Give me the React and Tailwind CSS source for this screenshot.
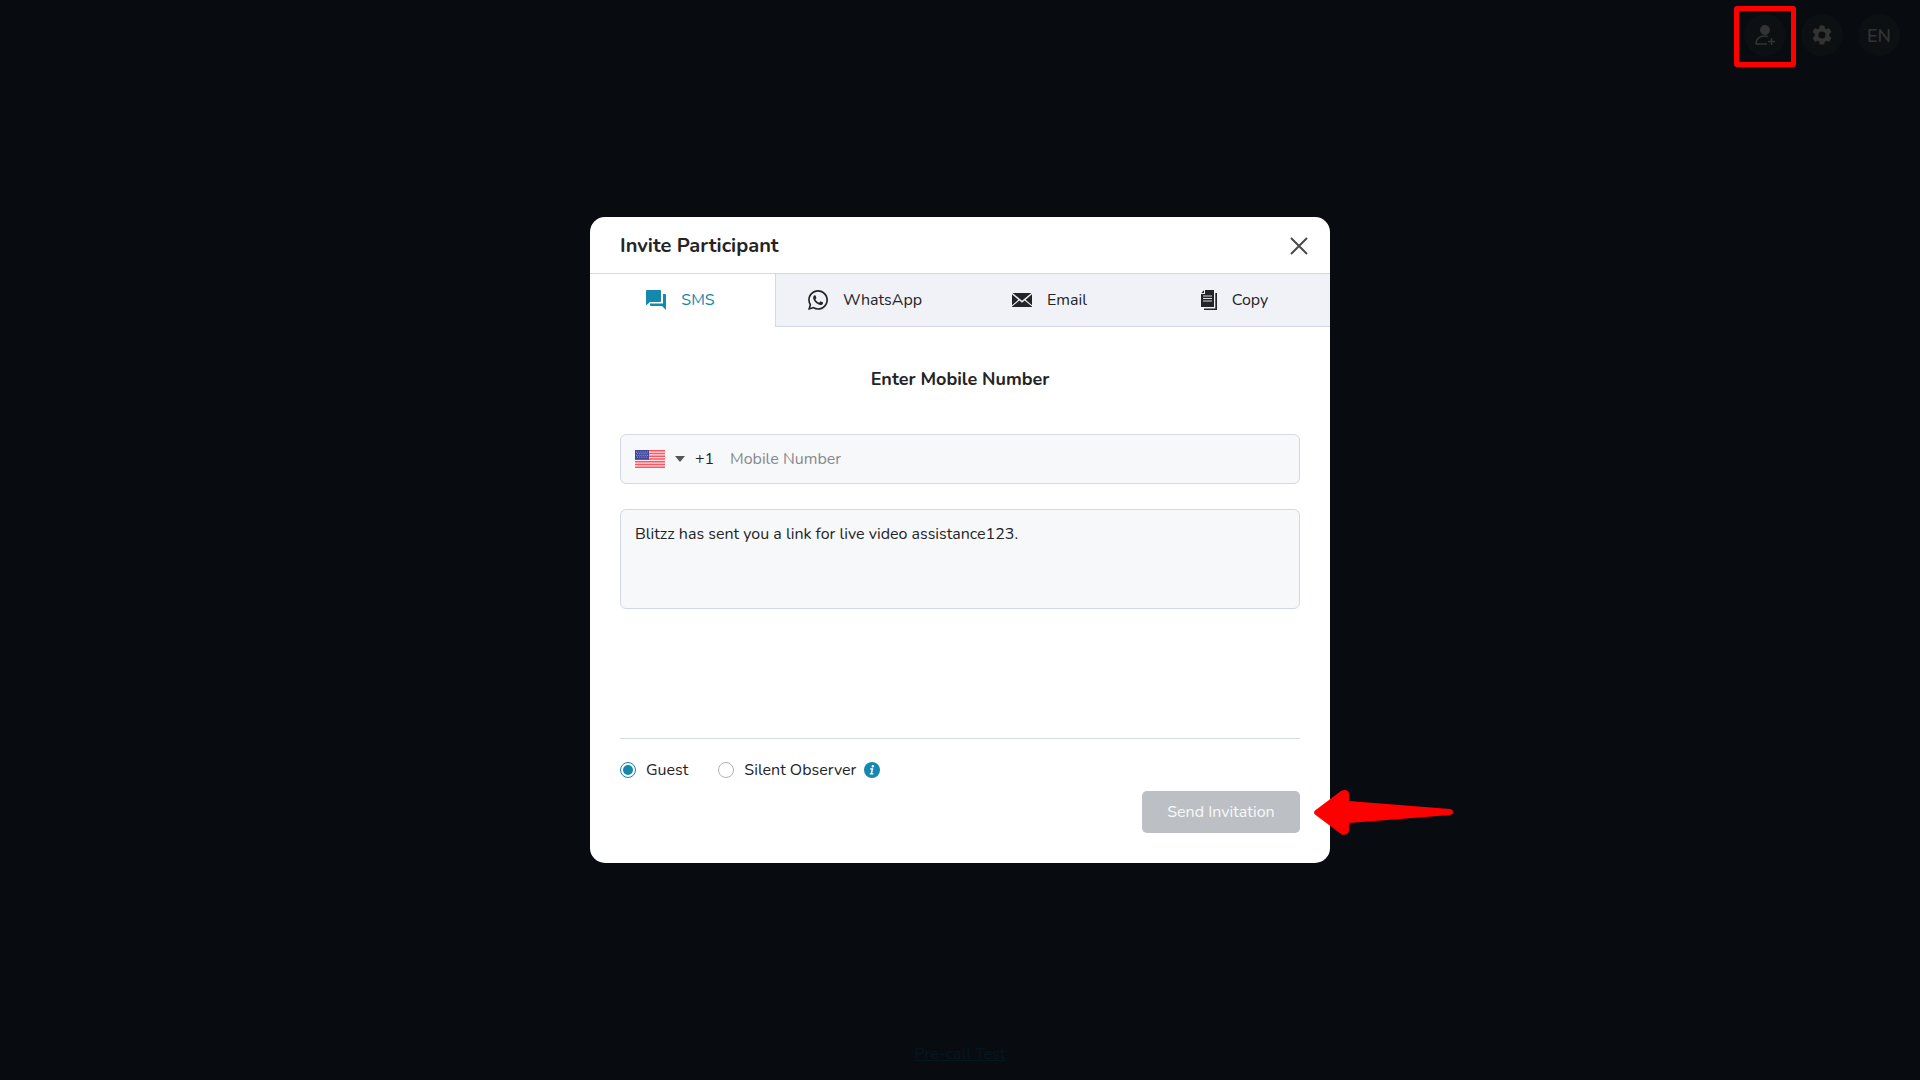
import { useState } from 'react';

const SmsIcon = () => (
  <svg viewBox="0 0 20 20" className="w-5 h-5" fill="currentColor" aria-hidden="true">
    <path d="M1 0h13a1 1 0 0 1 1 1v10a1 1 0 0 1-1 1H4l-4 3.500V1a1 1 0 0 1 1-1z" />
    <path d="M17 4h2a1 1 0 0 1 1 1v15l-4-4H5a1 1 0 0 1-1-1v-1.500h13z" />
  </svg>
);

const WhatsAppIcon = () => (
  <svg viewBox="0 0 24 24" className="w-5 h-5" fill="currentColor" aria-hidden="true">
    <path d="M12.040 0C5.500 0 .180 5.300.180 11.850c0 2.100.550 4.130 1.590 5.930L0 24l6.360-1.660a11.900 11.900 0 0 0 5.680 1.450c6.540 0 11.960-5.320 11.960-11.890C24 5.300 18.600 0 12.040 0zm0 21.780c-1.800 0-3.520-.480-5.030-1.380l-.360-.210-3.770.980 1-3.660-.240-.380a9.800 9.800 0 0 1-1.500-5.250c0-5.450 4.440-9.870 9.900-9.870 5.440 0 9.900 4.420 9.900 9.870s-4.460 9.900-9.900 9.900z" />
    <path d="M8.300 6.400c.3 0 .6 0 .8.600l.9 2.100c.1.300.1.500-.1.800l-.8 1c-.2.200-.2.400 0 .7 1 1.700 2.300 2.800 4 3.500.3.100.500.100.700-.1l.9-1.100c.2-.3.400-.3.700-.2l2.300 1.100c.300.200.500.300.400.800-.1 1.500-1.400 2.500-2.900 2.500-3.800-.3-8.600-4.600-9-8.500 0-1.500.9-3.200 2.100-3.200z" />
  </svg>
);

const EmailIcon = () => (
  <svg viewBox="0 0 20 14" className="w-5 h-[14px]" fill="currentColor" aria-hidden="true">
    <path d="M.6 0h18.800L10 7.800z" />
    <path d="M0 1.200 6.400 6.800 0 12.200zM20 1.200v11l-6.400-5.400z" />
    <path d="m7.400 7.600 2.600 2.200 2.600-2.200L20 13.500V14H0v-.5z" />
  </svg>
);

const CopyIcon = () => (
  <svg viewBox="0 0 16 20" className="w-4 h-5" fill="currentColor" aria-hidden="true">
    <path d="M4 0h9v17H0V4h4z" />
    <path d="M3 .3V3H.3z" />
    <path d="M14.300 3H16v17H3v-1.600h11.300z" />
    <path d="M2 6h9M2 8.500h9M2 11h9" stroke="#d9dbe2" />
  </svg>
);

const InviteIcon = () => (
  <svg viewBox="0 0 20 20" className="w-5 h-5" aria-hidden="true">
    <circle cx="10" cy="5" r="5" fill="currentColor" />
    <path d="M13 11.600c-1-.5-2-.6-3.500-.6C4.500 11 1 14.500 1 18v1h11" fill="none" stroke="currentColor" strokeWidth="1.500" />
    <path d="M16.500 13v7M13 16.500h7" stroke="currentColor" strokeWidth="1.500" />
  </svg>
);

const GearIcon = () => (
  <svg viewBox="2 2 20 20" className="w-5 h-5" fill="currentColor" aria-hidden="true">
    <path d="M19.140 12.940c.040-.300.060-.610.060-.940 0-.320-.020-.640-.070-.940l2.030-1.580a.490.490 0 0 0 .120-.610l-1.920-3.320a.488.488 0 0 0-.590-.220l-2.390.960c-.500-.380-1.030-.700-1.620-.940l-.360-2.540a.484.484 0 0 0-.480-.410h-3.840c-.240 0-.430.170-.470.410l-.360 2.540c-.590.240-1.130.570-1.620.940l-2.390-.960c-.220-.080-.470 0-.590.220L2.740 8.870c-.120.210-.080.470.120.610l2.030 1.580c-.050.300-.090.630-.090.940s.020.640.070.940l-2.030 1.580a.490.490 0 0 0-.120.610l1.920 3.320c.120.220.370.290.590.220l2.390-.960c.500.380 1.030.700 1.620.940l.360 2.540c.050.240.240.410.480.410h3.840c.240 0 .440-.170.470-.410l.360-2.540c.590-.240 1.130-.560 1.620-.940l2.390.960c.220.080.470 0 .590-.220l1.920-3.320c.120-.220.070-.470-.120-.610l-2.010-1.580zM12 15.600A3.600 3.600 0 1 1 12 8.400a3.600 3.600 0 0 1 0 7.200z" />
  </svg>
);

const CloseIcon = () => (
  <svg viewBox="0 0 18 18" className="w-[18px] h-[18px]" fill="none" stroke="currentColor" strokeWidth="2" aria-hidden="true">
    <path d="m1 1 16 16M17 1 1 17" />
  </svg>
);

const UsFlag = () => (
  <svg viewBox="0 0 30 18" className="w-[30px] h-[18px] shrink-0" aria-hidden="true">
    <rect width="30" height="18" fill="#ffe3e5" />
    <path
      d="M0 .7h30M0 3.500h30M0 6.200h30M0 9h30M0 11.800h30M0 14.500h30M0 17.300h30"
      stroke="#ff5560"
      strokeWidth="1.400"
    />
    <rect width="14" height="9.700" fill="#41479b" />
    <path
      d="M1 2h12M2 3.700h11M1 5.400h12M2 7.100h11"
      stroke="#a9acd6"
      strokeWidth=".9"
      strokeDasharray="1 1.200"
    />
  </svg>
);

const InfoIcon = () => (
  <svg viewBox="0 0 16 16" className="w-4 h-4" aria-hidden="true">
    <circle cx="8" cy="8" r="8" fill="#1488ad" />
    <circle cx="8.900" cy="4.200" r="1.200" fill="#fff" />
    <path d="M6.200 6.300h3.200l-1.200 5h1.300l-.3 1.200H5.700l.3-1.200h.6l.9-3.800H6z" fill="#fff" />
  </svg>
);

const Arrow = () => (
  <svg
    viewBox="0 0 139 46"
    className="absolute left-full top-1/2 -translate-y-1/2 ml-[14px] w-[139px] h-[46px]"
    fill="#ff0000"
    aria-hidden="true"
  >
    <path d="M1 21.500 27 2c3-2 8-1.500 8 3v7l101 8c4 .5 4 5.500 0 6L35 34v7c0 4.500-5 6-8 4L1 25.500c-1.300-1.300-1.300-2.700 0-4z" />
  </svg>
);

const tabs = [
  { id: 'sms', label: 'SMS', Icon: SmsIcon },
  { id: 'whatsapp', label: 'WhatsApp', Icon: WhatsAppIcon },
  { id: 'email', label: 'Email', Icon: EmailIcon },
  { id: 'copy', label: 'Copy', Icon: CopyIcon },
];

const roundButton = 'w-[42px] h-[42px] rounded-full bg-[#0c1013] text-[#333333] flex items-center justify-center';

const Radio = ({ label, value, role, setRole }) => (
  <label className="flex items-center gap-[10px]">
    <input
      type="radio"
      name="role"
      checked={role === value}
      onChange={() => setRole(value)}
      className="appearance-none w-4 h-4 rounded-full border border-[#b0b0b0] bg-white bg-clip-content p-[2px] checked:border-[#1488ad] checked:bg-[#1488ad]"
    />
    {label}
  </label>
);

export default function App() {
  const [tab, setTab] = useState('sms');
  const [role, setRole] = useState('guest');
  const [message, setMessage] = useState('Blitzz has sent you a link for live video assistance123.');

  return (
    <div className="min-h-screen flex flex-col bg-[#080c10] text-[#242426] text-base font-['Nunito','Lato',sans-serif]">
      <header className="h-[70px] shrink-0 px-5 flex items-center justify-end gap-[15px]">
        <div className="relative">
          <button type="button" aria-label="Invite participant" className={roundButton}>
            <InviteIcon />
          </button>
          <div className="absolute -top-2 -left-[10px] w-[62px] h-[61px] rounded-[3px] border-[5px] border-[#ff0000] pointer-events-none"></div>
        </div>
        <button type="button" aria-label="Settings" className={roundButton}>
          <GearIcon />
        </button>
        <button type="button" className={`${roundButton} pt-[2px] text-lg font-semibold`}>EN</button>
      </header>

      <main className="flex-1 flex items-center justify-center px-4">
        <section role="dialog" aria-labelledby="invite-title" className="w-full max-w-[740px] bg-white rounded-[15px]">
          <div className="h-14 pl-[30px] pr-[22px] pt-[2px] flex items-center justify-between">
            <h1 id="invite-title" className="text-xl font-bold">Invite Participant</h1>
            <button type="button" aria-label="Close" className="text-[#4a4a4a]">
              <CloseIcon />
            </button>
          </div>

          <div role="tablist" className="grid grid-cols-4 border-t border-[#d5d9e6]">
            {tabs.map(({ id, label, Icon }) => (
              <button
                key={id}
                type="button"
                role="tab"
                aria-selected={tab === id}
                onClick={() => setTab(id)}
                className={
                  tab === id
                    ? 'h-[53px] pr-1 pb-[2px] flex items-center justify-center gap-[15px] text-[#1488ad]'
                    : 'h-[53px] pr-[6px] pb-px flex items-center justify-center gap-[15px] border-b border-[#d5d9e6] bg-[#f1f2f7] [[aria-selected=true]+&]:border-l'
                }
              >
                <Icon />
                {label}
              </button>
            ))}
          </div>

          <form className="px-[30px] pt-10 pb-[30px]" onSubmit={(e) => e.preventDefault()}>
            <h2 className="text-lg leading-6 font-bold text-center">Enter Mobile Number</h2>

            <div className="mt-[43px] h-[50px] px-[14px] flex items-center rounded-md border border-[#d5d9e6] bg-[#f7f8fa]">
              <UsFlag />
              <svg viewBox="0 0 10 6" className="w-[10px] h-[6px] ml-[10px] shrink-0" fill="#555555" aria-hidden="true">
                <path d="M0 0h10L5 6z" />
              </svg>
              <select aria-label="Country code" className="appearance-none w-[35px] ml-[10px]">
                <option>+1</option>
              </select>
              <input
                type="tel"
                aria-label="Mobile Number"
                placeholder="Mobile Number"
                className="flex-1 min-w-0 h-full outline-none placeholder:text-[#86888c]"
              />
            </div>

            <textarea
              aria-label="Message"
              value={message}
              onChange={(e) => setMessage(e.target.value)}
              className="block mt-[25px] w-full h-[100px] px-[14px] py-3 resize-none rounded-md border border-[#d5d9e6] bg-[#f7f8fa] outline-none"
            />

            <div className="mt-[129px] pt-[19px] border-t border-[#d3dce4]">
              <div className="flex items-center gap-[30px]">
                <Radio label="Guest" value="guest" role={role} setRole={setRole} />
                <div className="flex items-center gap-2">
                  <Radio label="Silent Observer" value="observer" role={role} setRole={setRole} />
                  <InfoIcon />
                </div>
              </div>
              <div className="mt-[9px] flex justify-end">
                <div className="relative">
                  <button type="submit" disabled className="w-[158px] h-[42px] rounded-[5px] bg-[#bcc0c5] text-[#f7f8fa]">
                    Send Invitation
                  </button>
                  <Arrow />
                </div>
              </div>
            </div>
          </form>
        </section>
      </main>

      <footer className="h-[70px] shrink-0 pt-[18px] flex items-center justify-center">
        <a href="#test" className="underline text-[#04171f]">Pre-call Test</a>
      </footer>
    </div>
  );
}
